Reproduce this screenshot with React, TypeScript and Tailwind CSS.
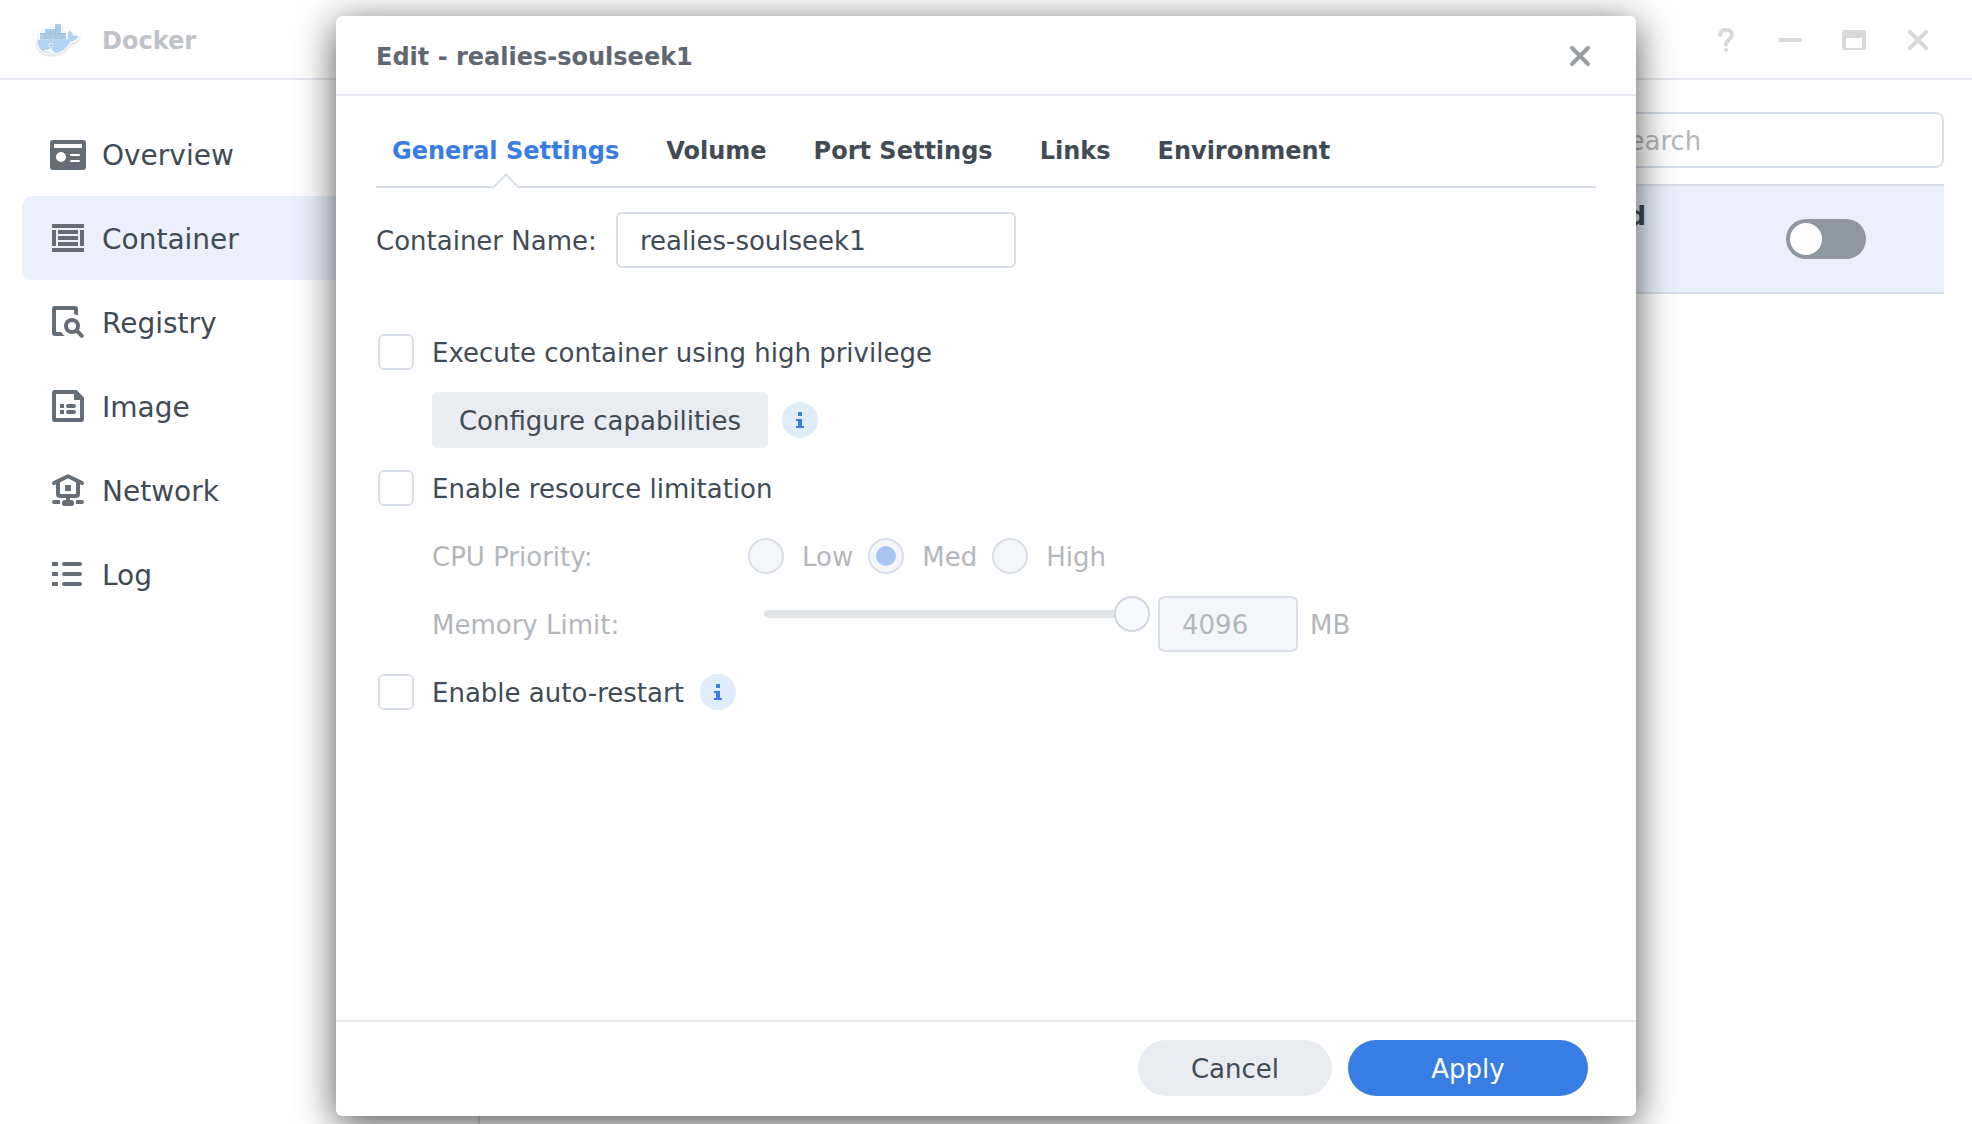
import { useState, type ReactNode } from "react";

const ICON = "#656d76";

function Whale() {
  return (
    <svg viewBox="0 0 44 34" className="h-[34px] w-11 drop-shadow-[0_1px_1px_rgba(0,0,0,0.2)]" aria-hidden="true">
      <g stroke="#fff" strokeWidth="2.500" strokeLinejoin="round">
        <path
          d="M1.500 16.500C.5 24 5.500 30.500 15.500 30.500C25 30.500 30.500 26 34.500 18.800C38 18.600 41 16.500 42.600 13.600C40.800 12.400 39 12.300 37.200 12.800C37 10.500 35.600 8.600 33.400 7.400C31.400 9.500 31.200 12.300 32.200 14.800C31.500 15.800 30.500 16.500 29 16.500Z"
          fill="#b1d4f5"
        />
        <path d="M4 10.500h5V6h10V1h6v9.500h5v6H4z" fill="#a9cbe6" />
      </g>
      <path
        d="M1.500 16.500C.5 24 5.500 30.500 15.500 30.500C25 30.500 30.500 26 34.500 18.800C38 18.600 41 16.500 42.600 13.600C40.800 12.400 39 12.300 37.200 12.800C37 10.500 35.600 8.600 33.400 7.400C31.400 9.500 31.200 12.300 32.200 14.800C31.500 15.800 30.500 16.500 29 16.500Z"
        fill="#b1d4f5"
      />
      <path d="M4 10.500h5V6h10V1h6v9.500h5v6H4z" fill="#abcde8" />
      <path d="M9 10.500v6M14 6v10.500M19 6v10.500M25 10.500v6M4 10.500h26M19 6h6" stroke="#9fc2de" strokeWidth="1" fill="none" />
      <path d="M7.500 26.800C10.500 27 13.500 26.500 15.500 25C15.500 27.300 17.500 29.300 20 29.800C15.500 30.800 10.500 30 7.500 26.800Z" fill="#fafdff" />
      <circle cx="14.800" cy="22" r="2" fill="#eef5fb" />
      <circle cx="15" cy="22.200" r="0.900" fill="#7f99ad" />
    </svg>
  );
}

function NavIcon({ children }: { children: ReactNode }) {
  return (
    <svg viewBox="0 0 36 36" className="size-9 shrink-0" fill="none" stroke={ICON} strokeWidth="4" aria-hidden="true">
      {children}
    </svg>
  );
}

const NAV = [
  {
    label: "Overview",
    icon: (
      <NavIcon>
        <path
          fill={ICON}
          stroke="none"
          fillRule="evenodd"
          d="M3 4h30a3 3 0 0 1 3 3v24a3 3 0 0 1-3 3H3a3 3 0 0 1-3-3V7a3 3 0 0 1 3-3zM4 8v4h28V8zM11 16a5 5 0 1 0 0 10a5 5 0 0 0 0-10zM21 18a1 1 0 0 0 0 2h8a1 1 0 0 0 0-2zM21 24a1 1 0 0 0 0 2h8a1 1 0 0 0 0-2z"
        />
      </NavIcon>
    ),
  },
  {
    label: "Container",
    icon: (
      <NavIcon>
        <path d="M2 6h32M2 30h32M4 10v16M32 10v16M8 12h20M8 18h20M8 24h20" />
      </NavIcon>
    ),
  },
  {
    label: "Registry",
    icon: (
      <NavIcon>
        <path
          fill={ICON}
          stroke="none"
          d="M5 2h20a3 3 0 0 1 3 3v6.500l-4-1.500V6H6v22h5l3.500 4H5a3 3 0 0 1-3-3V5a3 3 0 0 1 3-3z"
        />
        <circle cx="22" cy="22" r="6" />
        <path d="M27 27L31.800 31.800" strokeLinecap="round" />
      </NavIcon>
    ),
  },
  {
    label: "Image",
    icon: (
      <NavIcon>
        <path
          fill={ICON}
          stroke="none"
          fillRule="evenodd"
          d="M5 2h21.500L34 9.500V31a3 3 0 0 1-3 3H5a3 3 0 0 1-3-3V5a3 3 0 0 1 3-3zM6 6v24h24V12h-6V6z"
        />
        <path d="M10 18h4M10 24h4" />
        <path d="M18 18h6M18 24h6" strokeLinecap="round" />
      </NavIcon>
    ),
  },
  {
    label: "Network",
    icon: (
      <NavIcon>
        <path d="M4 11L18 4.300L32 11" strokeLinecap="round" strokeLinejoin="round" />
        <path d="M8 10v12a2 2 0 0 0 2 2h16a2 2 0 0 0 2-2V10M18 24v6" />
        <path d="M15 13h6v6h-6z" fill={ICON} stroke="none" />
        <path d="M4 30h4M28 30h4" strokeLinecap="round" />
        <path d="M8 28h2v4H8zM26 28h2v4h-2z" fill={ICON} stroke="none" />
        <rect x="12" y="28" width="12" height="6" rx="2.500" fill={ICON} stroke="none" />
      </NavIcon>
    ),
  },
  {
    label: "Log",
    icon: (
      <NavIcon>
        <path d="M2 8h6M2 18h6M2 28h6" />
        <path d="M14 8h16M14 18h16M14 28h16" strokeLinecap="round" />
      </NavIcon>
    ),
  },
];

const TABS = ["General Settings", "Volume", "Port Settings", "Links", "Environment"];

function WindowButton({ label, children }: { label: string; children: ReactNode }) {
  return (
    <button type="button" aria-label={label} className="flex size-6 items-center justify-center">
      <svg viewBox="0 0 24 24" className="size-6" fill="none" stroke="#d7d9db" strokeWidth="4" strokeLinecap="round" aria-hidden="true">
        {children}
      </svg>
    </button>
  );
}

function InfoButton({ label }: { label: string }) {
  return (
    <button type="button" aria-label={label} className="size-9 shrink-0 rounded-full bg-[#e0ebfc]">
      <svg viewBox="0 0 36 36" className="size-9" fill="#387de3" aria-hidden="true">
        <path d="M16 10h4v4h-4zM14 17h6v7h2v2h-8v-2h2v-5h-2z" />
      </svg>
    </button>
  );
}

function CheckRow({ label, children }: { label: string; children?: ReactNode }) {
  return (
    <div className="flex h-14 items-center gap-4 pl-0.5">
      <label className="flex items-center gap-[18px]">
        <input
          type="checkbox"
          className="size-9 shrink-0 appearance-none rounded-md border-2 border-[#d8dfe9] bg-white checked:border-[#387de3] checked:bg-[#387de3]"
        />
        <span className="pt-0.5">{label}</span>
      </label>
      {children}
    </div>
  );
}

function EditDialog() {
  const [tab, setTab] = useState(TABS[0]);
  return (
    <section
      role="dialog"
      aria-labelledby="dialog-title"
      className="flex w-full max-w-[1300px] flex-col rounded-md bg-white shadow-[0_8px_38px_rgba(0,0,0,0.68)]"
    >
      <header className="flex h-20 shrink-0 items-center justify-between border-b-2 border-[#e4e9ef] pt-0.5 pr-11 pl-10">
        <h2 id="dialog-title" className="pt-0.5 text-2xl font-bold text-[#5f6872]">
          Edit - realies-soulseek1
        </h2>
        <button type="button" aria-label="Close dialog" className="size-6">
          <svg viewBox="0 0 24 24" className="size-6" fill="none" stroke="#979da3" strokeWidth="4" strokeLinecap="round" aria-hidden="true">
            <path d="M4 4l16 16M20 4L4 20" />
          </svg>
        </button>
      </header>

      <div className="flex-1 px-10 pt-4">
        <div role="tablist" className="flex h-[76px] gap-[47px] border-b-2 border-[#d8dfe9] px-4">
          {TABS.map((name) => (
            <button
              key={name}
              type="button"
              role="tab"
              aria-selected={tab === name}
              onClick={() => setTab(name)}
              className="relative pt-1 text-2xl font-bold text-[#414b55] aria-selected:text-[#387de3]"
            >
              {name}
              {tab === name && (
                <svg
                  viewBox="0 0 24 16"
                  className="absolute -bottom-0.5 left-1/2 h-4 w-6 -translate-x-1/2"
                  fill="#fff"
                  aria-hidden="true"
                >
                  <path d="M0 16L12 3L24 16z" />
                  <path d="M0 15L12 2.500L24 15" fill="none" stroke="#d8dfe9" strokeWidth="2" />
                </svg>
              )}
            </button>
          ))}
        </div>

        <form className="flex flex-col gap-3 pt-6" onSubmit={(e) => e.preventDefault()}>
          <div className="mb-11 flex h-14 items-center">
            <label htmlFor="container-name" className="w-60 shrink-0 pt-0.5 whitespace-nowrap">
              Container Name:
            </label>
            <input
              id="container-name"
              type="text"
              defaultValue="realies-soulseek1"
              className="h-14 w-[400px] rounded-md border-2 border-[#d8dfe9] px-5.5 pt-0.5"
            />
          </div>

          <CheckRow label="Execute container using high privilege" />
          <div className="flex items-center gap-3.5 pl-14">
            <button type="button" className="h-14 w-[336px] rounded-md bg-[#e9edf2] pt-0.5">
              Configure capabilities
            </button>
            <InfoButton label="About capabilities" />
          </div>

          <CheckRow label="Enable resource limitation" />
          <div role="radiogroup" aria-labelledby="cpu-priority" className="flex h-14 items-center pl-14 text-[#b3b7bb]">
            <span id="cpu-priority" className="w-[316px] shrink-0 pt-0.5">
              CPU Priority:
            </span>
            <div className="flex gap-[15px]">
              {["Low", "Med", "High"].map((level) => (
                <label key={level} className="flex items-center gap-[18px]">
                  <input
                    type="radio"
                    name="cpu-priority"
                    disabled
                    defaultChecked={level === "Med"}
                    className="flex size-9 appearance-none items-center justify-center rounded-full border-2 border-[#d8dfe9] bg-[#f4f6fa] checked:before:size-5 checked:before:rounded-full checked:before:bg-[#a9c6f2]"
                  />
                  <span className="pt-0.5">{level}</span>
                </label>
              ))}
            </div>
          </div>
          <div className="flex h-14 items-center pl-14 text-[#b3b7bb]">
            <label htmlFor="memory-limit" className="w-[332px] shrink-0 pt-0.5">
              Memory Limit:
            </label>
            <input
              type="range"
              aria-label="Memory limit slider"
              min={0}
              max={4096}
              defaultValue={4096}
              disabled
              className="h-9 w-[386px] appearance-none self-start bg-transparent [&::-webkit-slider-runnable-track]:h-2 [&::-webkit-slider-runnable-track]:rounded-full [&::-webkit-slider-runnable-track]:bg-[#e1e5e8] [&::-webkit-slider-thumb]:-mt-3.5 [&::-webkit-slider-thumb]:size-9 [&::-webkit-slider-thumb]:appearance-none [&::-webkit-slider-thumb]:rounded-full [&::-webkit-slider-thumb]:border-2 [&::-webkit-slider-thumb]:border-[#d2d7db] [&::-webkit-slider-thumb]:bg-[#f6f9fe]"
            />
            <input
              id="memory-limit"
              type="text"
              disabled
              defaultValue="4096"
              className="ml-2 h-14 w-[140px] rounded-md border-2 border-[#d8dfe9] bg-[#f4f6fa] px-5.5 pt-0.5"
            />
            <span className="pt-0.5 pl-3">MB</span>
          </div>
          <CheckRow label="Enable auto-restart">
            <InfoButton label="About auto-restart" />
          </CheckRow>
        </form>
      </div>

      <footer className="flex h-24 shrink-0 items-center justify-end gap-4 border-t-2 border-[#e4e9ef] px-12 pb-0.5">
        <button type="button" className="h-14 w-[194px] rounded-full bg-[#e9edf2] pt-0.5">
          Cancel
        </button>
        <button type="button" className="h-14 w-60 rounded-full bg-[#387de3] pt-0.5 text-white">
          Apply
        </button>
      </footer>
    </section>
  );
}

export default function App() {
  return (
    <div className="relative flex min-h-screen flex-col bg-white font-['DejaVu_Sans',Verdana,sans-serif] text-[26px] leading-9 text-[#414b55]">
      <header className="flex h-20 shrink-0 items-center justify-between border-b-2 border-[#e4e9ef] pt-0.5 pr-[42px] pl-9">
        <div className="flex items-center gap-[22px]">
          <Whale />
          <h1 className="pt-0.5 text-2xl font-bold text-[#bfc2c6]">Docker</h1>
        </div>
        <div className="flex items-center gap-10">
          <WindowButton label="Help">
            <path d="M6 7C6.500 0 18 0 18 7C18 11 12 11.500 12 16.500" />
            <path d="M12 22v.01" />
          </WindowButton>
          <WindowButton label="Minimize">
            <path d="M2 12h20" />
          </WindowButton>
          <WindowButton label="Maximize">
            <path fill="#d7d9db" stroke="none" fillRule="evenodd" d="M2 2h20a2 2 0 0 1 2 2v16a2 2 0 0 1-2 2H2a2 2 0 0 1-2-2V4a2 2 0 0 1 2-2zM4 10v10h16V10z" />
          </WindowButton>
          <WindowButton label="Close">
            <path d="M4 4l16 16M20 4L4 20" />
          </WindowButton>
        </div>
      </header>

      <div className="flex flex-1">
        <nav className="w-[480px] shrink-0 border-r-2 border-[#d8dfe9] px-[22px] pt-8">
          {NAV.map(({ label, icon }) => (
            <a
              key={label}
              href={"#" + label.toLowerCase()}
              aria-current={label === "Container" ? "page" : undefined}
              className="flex h-[84px] items-center gap-4 rounded-[10px] px-7 text-[28px] aria-[current=page]:bg-[#eaf1fc]"
            >
              {icon}
              <span className="pt-[3px]">{label}</span>
            </a>
          ))}
        </nav>

        <main className="flex min-w-0 flex-1 flex-col gap-4 px-7 pt-8">
          <input
            type="search"
            aria-label="Search"
            placeholder="Search"
            className="h-14 w-[390px] self-end rounded-[8px] border-2 border-[#d8dfe9] pt-0.5 pl-14 placeholder:text-[#b3b7bb]"
          />
          <div className="flex h-[110px] justify-end border-y-2 border-[#d8dfe9] bg-[#eaf1fc] pr-[78px]">
            <strong className="pt-3">Stopped</strong>
            <button
              type="button"
              role="switch"
              aria-checked="false"
              aria-label="Run container"
              className="ml-[140px] h-10 w-20 self-center rounded-full bg-[#8f98a1] p-1"
            >
              <span className="block size-8 rounded-full bg-white" />
            </button>
          </div>
        </main>
      </div>

      <div className="absolute inset-0 flex justify-center overflow-hidden px-4 pt-4 pb-2">
        <EditDialog />
      </div>
    </div>
  );
}
